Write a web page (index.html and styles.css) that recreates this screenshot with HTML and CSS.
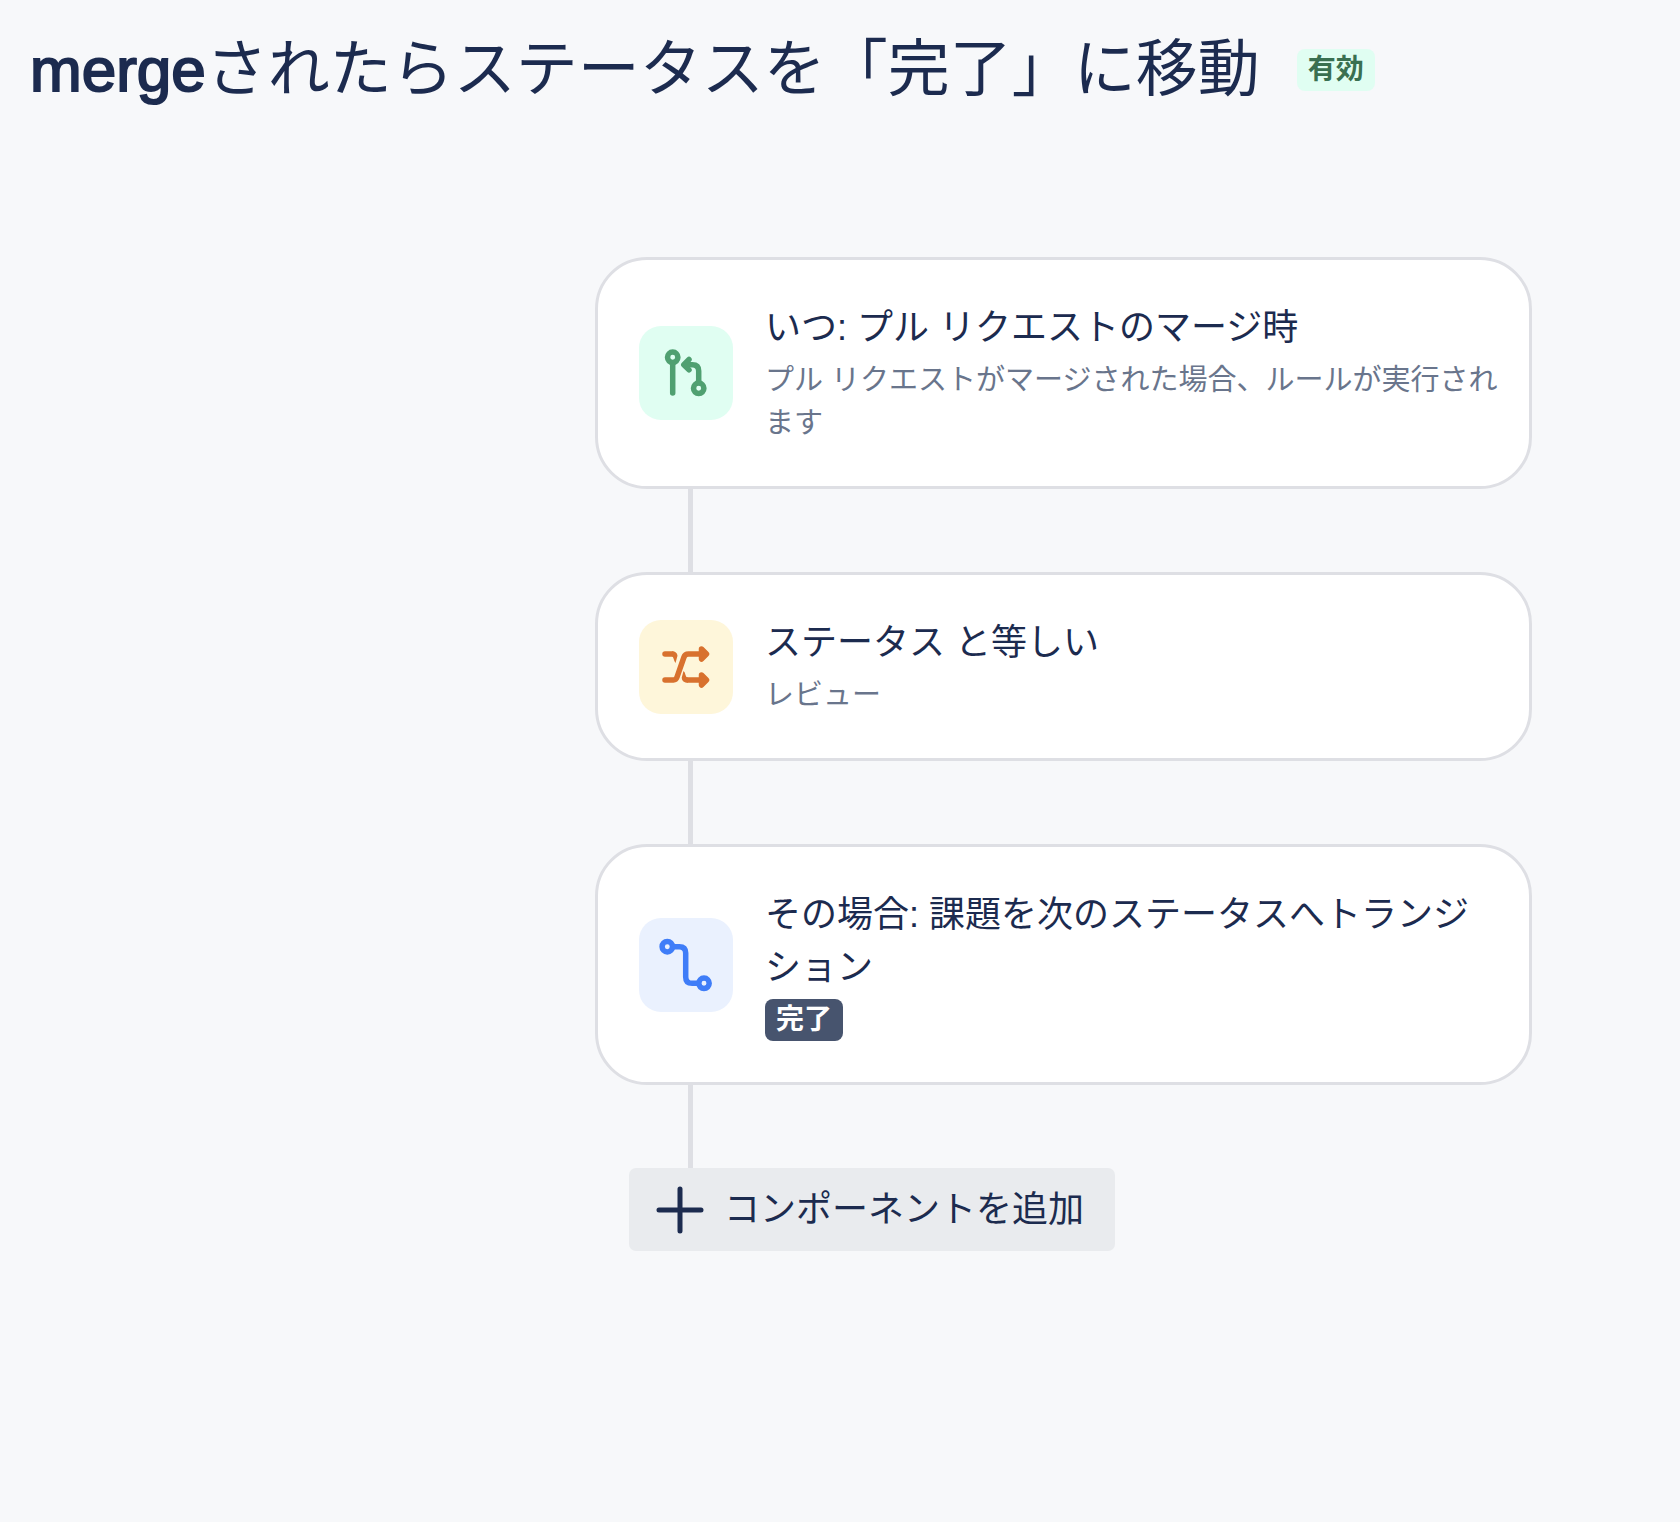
FILE: index.html
```html
<!DOCTYPE html>
<html lang="ja">
<head>
  <meta charset="UTF-8" />
  <meta name="viewport" content="width=device-width, initial-scale=1.0" />
  <title>mergeされたらステータスを「完了」に移動</title>
  <link rel="stylesheet" href="styles.css">
</head>
<body>
  <header class="rule-header">
    <h1><span class="latin">merge</span>されたらステータスを「完了」に移動</h1>
    <span class="badge badge-enabled">有効</span>
  </header>

  <main class="rule-chain">
    <section class="card">
      <div class="icon icon-trigger">
        <svg viewBox="0 0 94 94" fill="none" stroke="currentColor" stroke-width="5.5" stroke-linecap="round" stroke-linejoin="round" aria-hidden="true">
          <circle cx="33.7" cy="31.3" r="5.2" />
          <path d="M33.7 37v30" />
          <circle cx="59.7" cy="62.3" r="5.2" />
          <path d="M59.7 56.5V45q0-6.3-6.3-6.3H46" />
          <path d="M50 33.5l-5.2 5.2 5.2 5.2" />
        </svg>
      </div>
      <div class="card-body">
        <h2>いつ: プル リクエストのマージ時</h2>
        <p>プル リクエストがマージされた場合、ルールが実行されます</p>
      </div>
    </section>
    <div class="connector"></div>

    <section class="card">
      <div class="icon icon-condition">
        <svg viewBox="0 0 94 94" fill="none" stroke="currentColor" stroke-width="5.5" stroke-linecap="round" stroke-linejoin="round" aria-hidden="true">
          <path d="M26 60h8.500q2.500 0 3.500-2.800L45 37q1-3 4.500-3H63" />
          <path d="M26 34h7" />
          <path d="M63 60H49" />
          <path d="M33 31.300q5 0 5.500 4.500L36.500 43q-1-1-2-4.500-.5-2-1.500-2zM49 62.700q-6 0-6.300-5L44.500 51q1.500 1 2 4 .5 2.500 2.500 2.500z" fill="currentColor" stroke="none" />
          <path d="M62.500 29l5 5-5 5zM62.500 55l5 5-5 5z" fill="currentColor" />
        </svg>
      </div>
      <div class="card-body">
        <h2>ステータス と等しい</h2>
        <p>レビュー</p>
      </div>
    </section>
    <div class="connector"></div>

    <section class="card">
      <div class="icon icon-action">
        <svg viewBox="0 0 94 94" fill="none" stroke="currentColor" stroke-width="5.5" stroke-linecap="round" stroke-linejoin="round" aria-hidden="true">
          <circle cx="28.3" cy="28.7" r="5.2" />
          <path d="M34 28.700h6.300q6.400 0 6.400 6.400v23.800q0 6.400 6.400 6.400H59" />
          <circle cx="65" cy="65.3" r="5.2" />
        </svg>
      </div>
      <div class="card-body">
        <h2>その場合: 課題を次のステータスへトランジション</h2>
        <span class="badge badge-status">完了</span>
      </div>
    </section>
    <div class="connector"></div>

    <button type="button" class="add-button">
      <svg viewBox="0 0 48 48" fill="none" stroke="currentColor" stroke-width="5" stroke-linecap="round" aria-hidden="true">
        <path d="M24 3v42M3 24h42" />
      </svg>
      コンポーネントを追加
    </button>
  </main>
</body>
</html>
```
FILE: styles.css
```css
* {
  box-sizing: border-box;
}
body {
  margin: 0;
  font-family: "Liberation Sans", "Noto Sans CJK JP", sans-serif;
  background-color: #f7f8fa;
  color: #1c2b4f;
}
h1, h2, p {
  margin: 0;
  font-weight: 400;
}
.rule-header {
  display: flex;
  align-items: center;
  gap: 37px;
  padding: 25px 30px 23px;
}
h1 {
  font-size: 62px;
  line-height: 90px;
}
.latin {
  -webkit-text-stroke: 2px currentColor;
}
.badge {
  display: block;
  flex-shrink: 0;
  width: fit-content;
  padding: 0 11px;
  border-radius: 8px;
  font-size: 28px;
  font-weight: 700;
  line-height: 42px;
}
.badge-enabled {
  background-color: #e0fef2;
  color: #3a7051;
}
.badge-status {
  background-color: #47546e;
  color: #fff;
}
.rule-chain {
  max-width: 937px;
  margin: 119px 148px 0 auto;
}
.card {
  display: flex;
  align-items: center;
  gap: 32px;
  padding: 40px 28px 40px 41px;
  background-color: #fff;
  border: 3px solid #dedfe4;
  border-radius: 52px;
}
.icon {
  flex-shrink: 0;
  width: 94px;
  height: 94px;
  border-radius: 22px;
}
.icon svg {
  display: block;
}
.icon-trigger {
  background-color: #e0fef2;
  color: #50a071;
}
.icon-condition {
  background-color: #fef6da;
  color: #d8712e;
}
.icon-action {
  background-color: #eaf1fe;
  color: #3f7df8;
}
.card-body {
  flex: 1;
  padding: 1px 0;
}
h2 {
  margin-bottom: 5px;
  font-size: 36px;
  line-height: 53px;
}
p {
  color: #69758c;
  font-size: 29px;
  line-height: 43px;
}
.connector {
  width: 5px;
  height: 83px;
  margin-left: 93px;
  background-color: #dedfe4;
}
.add-button {
  display: flex;
  align-items: center;
  gap: 20px;
  margin-left: 34px;
  padding: 15px 31px 15px 27px;
  border: none;
  border-radius: 7px;
  background-color: #e9ebee;
  color: inherit;
  font-family: inherit;
  font-size: 36px;
  line-height: 53px;
  cursor: pointer;
}
.add-button:hover {
  background-color: #dddfe5;
}
.add-button svg {
  width: 48px;
  height: 48px;
}
```
